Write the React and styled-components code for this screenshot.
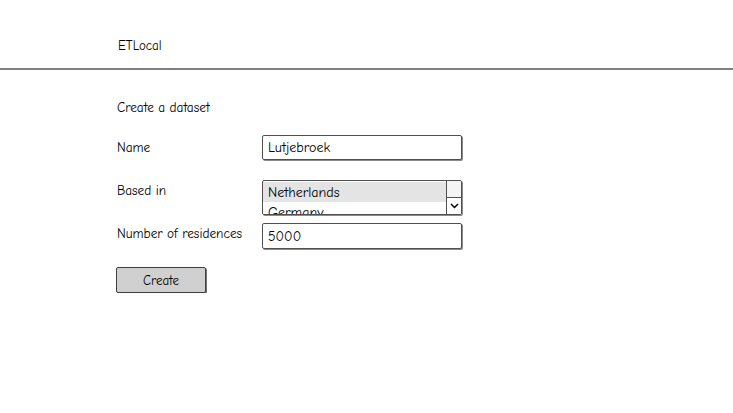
import React from "react";
import styled, { createGlobalStyle } from "styled-components";

const GlobalStyle = createGlobalStyle`
  body {
    margin: 0;
    background: #ffffff;
    font-family: "Comic Sans MS", "Comic Neue", "DejaVu Sans", sans-serif;
    color: #000;
  }
`;

const Header = styled.header`
  height: 70px;
  border-bottom: 2px solid #808080;
  display: flex;
  align-items: center;
  padding-left: 118px;
  box-sizing: border-box;
`;

const Brand = styled.div`
  font-size: 13px;
  margin-top: 23px;
`;

const Main = styled.main`
  padding: 30px 0 0 117px;
`;

const Title = styled.div`
  font-size: 13.3px;
  margin-bottom: 20px;
`;

const Row = styled.div`
  display: flex;
  align-items: flex-start;
  margin-top: ${(p) => p.$gap || 0}px;
`;

const Label = styled.div`
  width: 145px;
  font-size: 13.3px;
  padding-top: ${(p) => p.$top || 4}px;
`;

const Field = styled.div`
  width: 200px;
  height: ${(p) => p.$h}px;
  border: 1px solid #505050;
  border-radius: 2px;
  box-shadow: 1px 1px 0 #8a8a8a;
  box-sizing: border-box;
  font-size: 14px;
  padding: 0 5px;
  display: flex;
  align-items: center;
  background: #fff;
`;

const ListBox = styled.div`
  position: relative;
  width: 200px;
  height: 35px;
  border: 1px solid #505050;
  border-radius: 2px;
  box-shadow: 1px 1px 0 #8a8a8a;
  box-sizing: border-box;
  overflow: hidden;
  font-size: 14px;
`;

const Options = styled.div`
  padding-top: 1px;
`;

const Option = styled.div`
  height: 20px;
  line-height: 21px;
  padding-left: 5px;
  margin-right: 14px;
  background: ${(p) => (p.$selected ? "#e4e4e4" : "#fff")};
`;

const ScrollTrack = styled.div`
  position: absolute;
  right: 0;
  top: 0;
  bottom: 0;
  width: 14px;
  border-left: 1px solid #505050;
  background: #f4f4f4;
`;

const Scroll = styled.div`
  position: absolute;
  right: 0;
  bottom: 0;
  width: 14px;
  height: 16px;
  border-left: 1px solid #505050;
  border-top: 1px solid #505050;
  background: #fff;
  display: flex;
  align-items: center;
  justify-content: center;
`;

const Button = styled.button`
  margin-top: 18px;
  width: 90px;
  height: 26px;
  margin-left: -1px;
  background: #d0d0d0;
  border: 1px solid #404040;
  border-radius: 2px;
  box-shadow: 1px 1px 0 #707070;
  font-family: inherit;
  font-size: 13px;
  color: #000;
  padding: 0;
`;

export default function App() {
  return (
    <>
      <GlobalStyle />
      <Header>
        <Brand>ETLocal</Brand>
      </Header>
      <Main>
        <Title>Create a dataset</Title>
        <Row>
          <Label $top={5}>Name</Label>
          <Field $h={25}>Lutjebroek</Field>
        </Row>
        <Row $gap={20}>
          <Label $top={3}>Based in</Label>
          <ListBox>
            <Options>
              <Option $selected>Netherlands</Option>
              <Option>Germany</Option>
            </Options>
            <ScrollTrack />
            <Scroll>
              <svg width="9" height="6" viewBox="0 0 9 6">
                <path d="M1 1 L4.5 4.5 L8 1" stroke="#000" strokeWidth="1.5" fill="none" />
              </svg>
            </Scroll>
          </ListBox>
        </Row>
        <Row $gap={8}>
          <Label $top={3}>Number of residences</Label>
          <Field $h={26}>5000</Field>
        </Row>
        <Button>Create</Button>
      </Main>
    </>
  );
}
